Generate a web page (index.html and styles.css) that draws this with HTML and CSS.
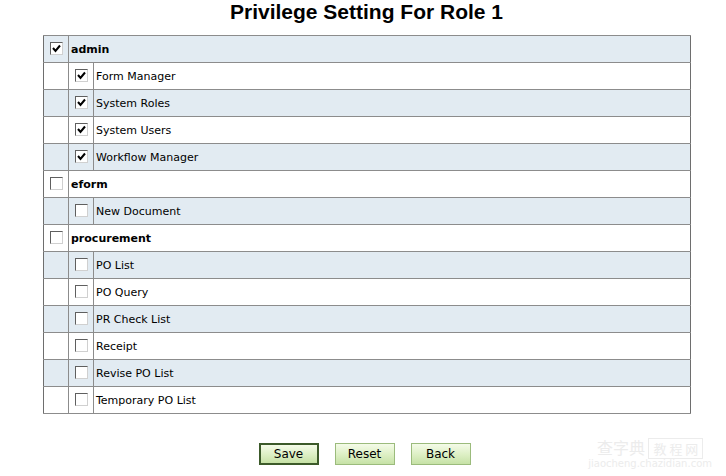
FILE: index.html
```html
<!DOCTYPE html>
<html>
<head>
<meta charset="utf-8">
<link rel="stylesheet" href="styles.css">
</head>
<body>
<div class="page">
  <h1 class="title">Privilege Setting For Role 1</h1>
  <table class="priv">
    <tr class="alt"><td class="c1"><span class="cb on"></span></td><td class="grp" colspan="2">admin</td></tr>
    <tr><td class="c1"></td><td class="c2"><span class="cb on"></span></td><td class="lbl">Form Manager</td></tr>
    <tr class="alt"><td class="c1"></td><td class="c2"><span class="cb on"></span></td><td class="lbl">System Roles</td></tr>
    <tr><td class="c1"></td><td class="c2"><span class="cb on"></span></td><td class="lbl">System Users</td></tr>
    <tr class="alt"><td class="c1"></td><td class="c2"><span class="cb on"></span></td><td class="lbl">Workflow Manager</td></tr>
    <tr><td class="c1"><span class="cb"></span></td><td class="grp" colspan="2">eform</td></tr>
    <tr class="alt"><td class="c1"></td><td class="c2"><span class="cb"></span></td><td class="lbl">New Document</td></tr>
    <tr><td class="c1"><span class="cb"></span></td><td class="grp" colspan="2">procurement</td></tr>
    <tr class="alt"><td class="c1"></td><td class="c2"><span class="cb"></span></td><td class="lbl">PO List</td></tr>
    <tr><td class="c1"></td><td class="c2"><span class="cb"></span></td><td class="lbl">PO Query</td></tr>
    <tr class="alt"><td class="c1"></td><td class="c2"><span class="cb"></span></td><td class="lbl">PR Check List</td></tr>
    <tr><td class="c1"></td><td class="c2"><span class="cb"></span></td><td class="lbl">Receipt</td></tr>
    <tr class="alt"><td class="c1"></td><td class="c2"><span class="cb"></span></td><td class="lbl">Revise PO List</td></tr>
    <tr><td class="c1"></td><td class="c2"><span class="cb"></span></td><td class="lbl">Temporary PO List</td></tr>
  </table>
  <div class="actions">
    <button class="btn focus">Save</button>
    <button class="btn">Reset</button>
    <button class="btn">Back</button>
  </div>
</div>
<div class="wm">
  <div class="wm1">查字典 <span class="wmbox">教 程 网</span></div>
  <div class="wm2">jiaocheng.chazidian.com</div>
</div>
</body>
</html>
```
FILE: styles.css
```css
html, body {
  margin: 0;
  padding: 0;
  background: #ffffff;
}
body {
  width: 726px;
  height: 476px;
  overflow: hidden;
  position: relative;
  font-family: "DejaVu Sans", Verdana, sans-serif;
  color: #000;
}
.page {
  width: 647px;
  margin-left: 43px;
}
.title {
  margin: 0;
  height: 35px;
  line-height: 24px;
  text-align: center;
  font-family: "Liberation Sans", Arial, sans-serif;
  font-weight: bold;
  font-size: 21px;
  color: #000;
}
.priv {
  width: 648px;
  border-collapse: collapse;
  border: 1px solid #6e6e6e;
}
.priv td {
  height: 26px;
  padding: 0;
  border-top: 1px solid #8c8c8c;
  border-bottom: 1px solid #8c8c8c;
  font-size: 11px;
  vertical-align: middle;
}
.priv tr.alt td {
  background: #e2ebf2;
}
.priv td.c1 {
  width: 24px;
  border-right: 1px solid #8c8c8c;
  text-align: center;
}
.priv td.c2 {
  width: 24px;
  border-right: 1px solid #8c8c8c;
  text-align: center;
}
.priv td.grp {
  font-weight: bold;
  padding-left: 2px;
}
.priv td.lbl {
  padding-left: 2px;
}
.cb {
  display: inline-block;
  width: 11px;
  height: 11px;
  background: #fff;
  border-top: 1px solid #5f5f5f;
  border-left: 1px solid #5f5f5f;
  border-right: 1px solid #d0d0d0;
  border-bottom: 1px solid #d0d0d0;
  vertical-align: middle;
  position: relative;
  top: -1px;
}
.cb.on {
  background: #fff url("data:image/svg+xml;utf8,<svg xmlns='http://www.w3.org/2000/svg' width='11' height='11'><path d='M2 5 L4.5 8 L9 2.5' stroke='black' stroke-width='2' fill='none'/></svg>") no-repeat center;
}
.actions {
  display: flex;
  justify-content: center;
  gap: 16px;
  margin-top: 29px;
  padding-right: 4px;
}
.btn {
  width: 60px;
  height: 22px;
  padding: 0;
  font-family: "DejaVu Sans", Verdana, sans-serif;
  font-size: 12px;
  color: #000;
  background: linear-gradient(to bottom, #f4fbe8 0%, #dcefc3 55%, #c6e1a6 100%);
  border: 1px solid #9bbb7c;
}
.btn.focus {
  border: 2px solid #3c5a2a;
}
.wm {
  position: absolute;
  right: 14px;
  bottom: 6px;
  color: #ececec;
  font-family: "Noto Sans CJK SC", sans-serif;
  text-align: center;
}
.wm1 {
  font-size: 16px;
  line-height: 18px;
}
.wmbox {
  border: 1px solid #ececec;
  padding: 0 4px;
  font-size: 13px;
}
.wm2 {
  font-family: "DejaVu Sans", sans-serif;
  font-size: 10px;
  line-height: 12px;
}
```
